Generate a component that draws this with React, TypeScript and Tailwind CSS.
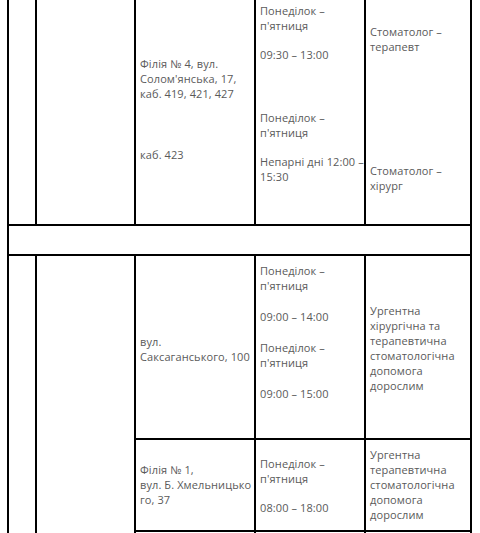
import React from "react";

const L = ({ children, className = "" }: { children: React.ReactNode; className?: string }) => (
  <div className={"whitespace-nowrap h-[15px] " + className}>{children}</div>
);

export default function App() {
  return (
    <div
      className="w-[480px] h-[533px] overflow-hidden bg-white text-[11px] leading-[15px] tracking-[0.1px] text-[#5a5a5a]"
      style={{ fontFamily: '"Open Sans", "Noto Sans", sans-serif' }}
    >
      <div className="ml-[7px] w-[465px] border-l-2 border-r-2 border-black">
        {/* Row 1 */}
        <div className="flex h-[226px] border-b-2 border-black">
          <div className="w-[28px] border-r-2 border-black" />
          <div className="w-[99px] border-r-2 border-black" />
          <div className="w-[120px] border-r-2 border-black pl-[4px] pt-[56px]">
            <L>Філія № 4, вул.</L>
            <L>Солом'янська, 17,</L>
            <L>каб. 419, 421, 427</L>
            <L className="mt-[46px]">каб. 423</L>
          </div>
          <div className="w-[110px] border-r-2 border-black pl-[4px] pt-[3px]">
            <L>Понеділок –</L>
            <L>п'ятниця</L>
            <L className="mt-[14px]">09:30 – 13:00</L>
            <L className="mt-[48px]">Понеділок –</L>
            <L>п'ятниця</L>
            <L className="mt-[14px]">Непарні дні 12:00 –</L>
            <L>15:30</L>
          </div>
          <div className="flex-1 pl-[4px] pt-[24px]">
            <L>Стоматолог –</L>
            <L>терапевт</L>
            <L className="mt-[109px]">Стоматолог –</L>
            <L>хірург</L>
          </div>
        </div>
        {/* Row 2 (empty) */}
        <div className="h-[30px] border-b-2 border-black" />
        {/* Row 3 */}
        <div className="flex">
          <div className="w-[28px] border-r-2 border-black" />
          <div className="w-[99px] border-r-2 border-black" />
          <div className="flex-1 flex flex-col">
            <div className="flex h-[184px] border-b-2 border-black">
              <div className="w-[120px] border-r-2 border-black pl-[4px] pt-[78px]">
                <L>вул.</L>
                <L>Саксаганського, 100</L>
              </div>
              <div className="w-[110px] border-r-2 border-black pl-[4px] pt-[7px]">
                <L>Понеділок –</L>
                <L>п'ятниця</L>
                <L className="mt-[16px]">09:00 – 14:00</L>
                <L className="mt-[16px]">Понеділок –</L>
                <L>п'ятниця</L>
                <L className="mt-[16px]">09:00 – 15:00</L>
              </div>
              <div className="flex-1 pl-[4px] pt-[47px]">
                <L>Ургентна</L>
                <L>хірургічна та</L>
                <L>терапевтична</L>
                <L>стоматологічна</L>
                <L>допомога</L>
                <L>дорослим</L>
              </div>
            </div>
            <div className="flex h-[92px] border-b-2 border-black">
              <div className="w-[120px] border-r-2 border-black pl-[4px] pt-[22px]">
                <L>Філія № 1,</L>
                <L>вул. Б. Хмельницько</L>
                <L>го, 37</L>
              </div>
              <div className="w-[110px] border-r-2 border-black pl-[4px] pt-[16px]">
                <L>Понеділок –</L>
                <L>п'ятниця</L>
                <L className="mt-[14px]">08:00 – 18:00</L>
              </div>
              <div className="flex-1 pl-[4px] pt-[7px]">
                <L>Ургентна</L>
                <L>терапевтична</L>
                <L>стоматологічна</L>
                <L>допомога</L>
                <L>дорослим</L>
              </div>
            </div>
            <div className="flex h-[40px]">
              <div className="w-[120px] border-r-2 border-black" />
              <div className="w-[110px] border-r-2 border-black" />
              <div className="flex-1" />
            </div>
          </div>
        </div>
      </div>
    </div>
  );
}
